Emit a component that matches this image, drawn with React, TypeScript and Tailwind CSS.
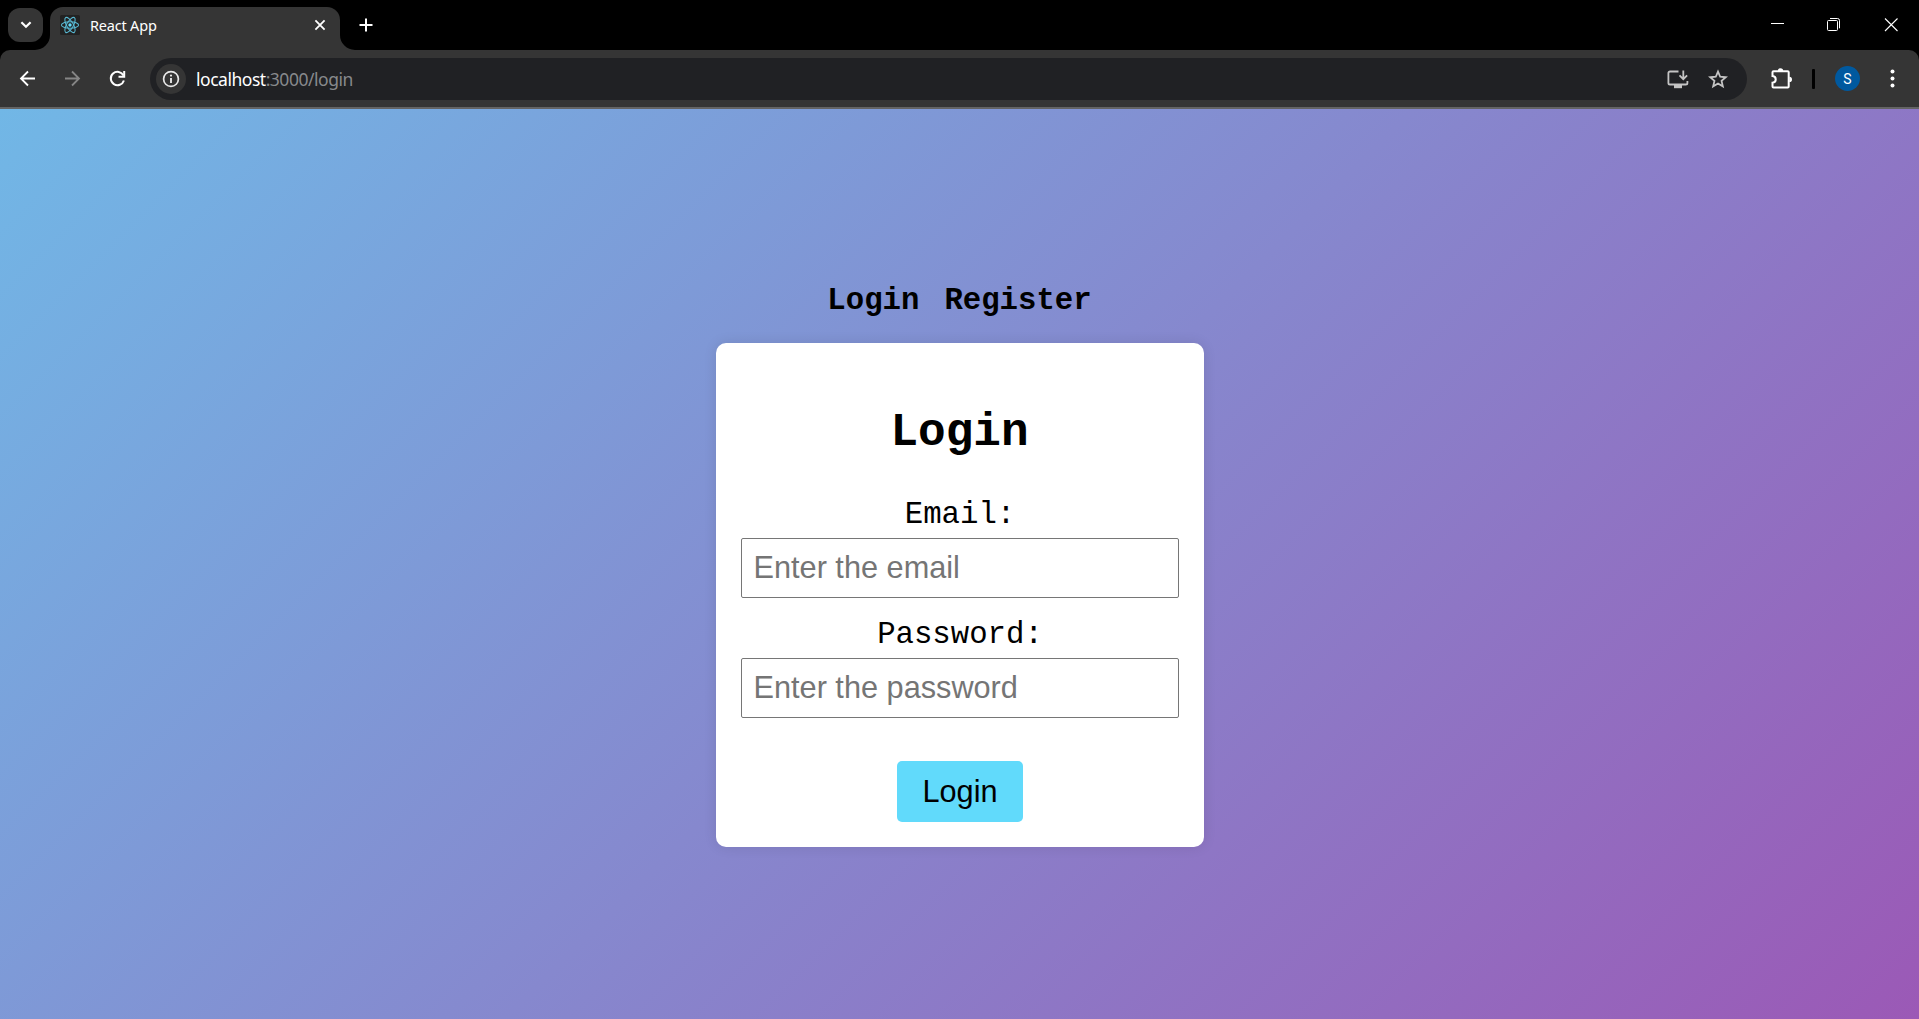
import React from 'react';

function ReactLogo() {
  return (
    <svg className="ml-[10px] h-5 w-5 shrink-0" viewBox="0 0 20 20" fill="none">
      <rect width="20" height="20" rx="1.5" fill="#222222" />
      <g stroke="#58b9d3" strokeWidth="1.05">
        <ellipse cx="10" cy="10" rx="8.6" ry="3.3" />
        <ellipse cx="10" cy="10" rx="8.6" ry="3.3" transform="rotate(60 10 10)" />
        <ellipse cx="10" cy="10" rx="8.6" ry="3.3" transform="rotate(120 10 10)" />
      </g>
      <circle cx="10" cy="10" r="1.7" fill="#61dafb" />
    </svg>
  );
}

function TabStrip() {
  return (
    <div className="flex h-[50px] bg-black text-white">
      <button className="mt-2 ml-2 flex h-[34px] w-[35px] items-center justify-center rounded-[12px] bg-[#353535]">
        <svg width="12" height="8" viewBox="0 0 12 8" fill="none" stroke="#fff" strokeWidth="2.2">
          <path d="M1.4 1.3 6 5.8l4.6-4.5" />
        </svg>
      </button>
      <div className="relative mt-[7px] ml-[7px] flex h-[43px] w-[290px] rounded-t-[13px] bg-[#353535]">
        <svg className="absolute bottom-0 -left-[15px]" width="15" height="15">
          <path d="M15 0v15H0A15 15 0 0 0 15 0Z" fill="#353535" />
        </svg>
        <svg className="absolute -right-[15px] bottom-0" width="15" height="15">
          <path d="M0 0v15h15A15 15 0 0 1 0 0Z" fill="#353535" />
        </svg>
        <div className="flex h-9 w-full items-center">
          <ReactLogo />
          <span className='ml-[10px] font-["Noto_Sans",sans-serif] text-[14.5px] leading-5 tracking-[-0.2px] whitespace-nowrap'>
            React App
          </span>
          <svg className="mr-[14px] ml-auto" width="12" height="12" viewBox="0 0 12 12" stroke="#fff" strokeWidth="1.8">
            <path d="m1.4 1.4 9.2 9.2m0-9.2-9.2 9.2" />
          </svg>
        </div>
      </div>
      <svg className="mt-[18px] ml-[19px]" width="14" height="14" viewBox="0 0 14 14" stroke="#fff" strokeWidth="2">
        <path d="M7 .5v13M.5 7h13" />
      </svg>
      <div className="mt-[17px] mr-5 ml-auto flex gap-[42px]">
        <svg width="15" height="15" viewBox="0 0 15 15" stroke="#fff">
          <path d="M1 6.5h13" />
        </svg>
        <svg width="15" height="15" viewBox="0 0 15 15" fill="none" stroke="#fff">
          <rect x=".5" y="3.5" width="10" height="10" rx="1" />
          <path d="M3 1.5h7.5a2 2 0 0 1 2 2v7.8" />
        </svg>
        <svg width="15" height="15" viewBox="0 0 15 15" stroke="#fff" strokeWidth="1.1">
          <path d="m1 1.5 12.5 12.5M13.5 1.5 1 14" />
        </svg>
      </div>
    </div>
  );
}

function Toolbar() {
  return (
    <div className="bg-black">
      <div className="flex h-[59px] items-start rounded-t-[10px] border-b-2 border-[#646464] bg-[#353535]">
        <div className="mt-[19px] flex">
          <svg className="ml-[19px]" width="18" height="19" viewBox="0 0 18 19" fill="none" stroke="#fff" strokeWidth="1.8">
            <path d="M16 9.5H2.3M9 2.5l-7 7 7 7" />
          </svg>
          <svg className="ml-[26px]" width="18" height="19" viewBox="0 0 18 19" fill="none" stroke="#868686" strokeWidth="1.8">
            <path d="M2 9.5h13.7M9 2.5l7 7-7 7" />
          </svg>
          <svg className="ml-[27px]" width="19" height="19" viewBox="0 0 19 19" fill="none" stroke="#fff" strokeWidth="2">
            <path d="M15.5 6.5A6.7 6.7 0 1 0 15.9 11.5" />
            <path d="M16.2 2v5.7h-5.7" />
          </svg>
        </div>
        <div className="mt-2 ml-[23px] flex h-[42px] w-[1597px] items-center rounded-full bg-[#202124]">
          <div className="ml-[6px] flex h-[30px] w-[30px] items-center justify-center rounded-full bg-[#353535]">
            <svg width="18" height="18" viewBox="0 0 18 18" fill="none">
              <circle cx="9" cy="9" r="7.4" stroke="#e8e8e8" strokeWidth="1.7" />
              <path d="M9 8v5" stroke="#e8e8e8" strokeWidth="1.9" />
              <circle cx="9" cy="5.6" r="1.1" fill="#e8e8e8" />
            </svg>
          </div>
          <div className='ml-[10px] font-["Noto_Sans",sans-serif] text-[17.5px] leading-6 tracking-[-0.48px] whitespace-nowrap text-[#87898c]'>
            <span className="text-white">localhost</span>:3000/login
          </div>
          <svg className="ml-auto" width="22" height="20" viewBox="0 0 22 20" fill="none">
            <path d="M11.5 2.5H3a1.6 1.6 0 0 0-1.6 1.6v9.8A1.6 1.6 0 0 0 3 15.5h15.8a1.6 1.6 0 0 0 1.6-1.6V12" stroke="#c4c4c4" strokeWidth="1.8" />
            <path d="M7 16h8v3.2H7z" fill="#c4c4c4" />
            <path d="M16.3 1.5v8.5m-3.8-3.7 3.8 3.9 3.8-3.9" stroke="#c4c4c4" strokeWidth="1.8" />
          </svg>
          <svg className="mr-[19px] ml-[19px]" width="20" height="20" viewBox="0 0 20 20" fill="none">
            <path d="m10 2.6 2.2 5.15 5.6.48-4.24 3.68 1.27 5.46L10 14.48l-4.83 2.89 1.27-5.46L2.2 8.23l5.6-.48L10 2.6Z" stroke="#c4c4c4" strokeWidth="1.8" />
          </svg>
        </div>
        <svg className="mt-[17px] ml-[23px]" width="23" height="23" viewBox="0 0 23 23" fill="none">
          <path d="M3.5 4.3h14.2c.6 0 1 .4 1 1v14.2c0 .6-.4 1-1 1H3.5c-.6 0-1-.4-1-1v-3.8c4.3-.5 4.3-6.1 0-6.6V5.3c0-.6.4-1 1-1Z" stroke="#fff" strokeWidth="2" />
          <path d="M7.8 4a2.7 2.7 0 0 1 5.4 0zM19.3 9.7a2.7 2.7 0 0 1 0 5.4z" fill="#fff" />
        </svg>
        <div className="mt-[19px] ml-[19px] h-5 w-[3px] rounded-[1px] bg-black" />
        <div className='mt-4 ml-5 flex h-[25px] w-[25px] items-center justify-center rounded-full bg-[#00599f] font-["Roboto",sans-serif] text-[14px] leading-none text-white'>
          S
        </div>
        <svg className="mt-[17px] ml-[30px]" width="5" height="23" viewBox="0 0 5 23" fill="#fff">
          <circle cx="2.5" cy="4.5" r="2" />
          <circle cx="2.5" cy="11.5" r="2" />
          <circle cx="2.5" cy="18.5" r="2" />
        </svg>
      </div>
    </div>
  );
}

function Field({ label, placeholder, type }: { label: string; placeholder: string; type: string }) {
  return (
    <label className="block pt-px text-center leading-9">
      <span className="ml-px">{label}</span>
      <input
        type={type}
        placeholder={placeholder}
        className='mt-[5px] block h-[60px] w-full rounded-[2px] border border-[#767676] bg-white px-3 font-["Liberation_Sans",Arial,sans-serif] placeholder:text-[#757575]'
      />
    </label>
  );
}

export default function App() {
  return (
    <div className="flex h-[1019px] w-[1919px] flex-col overflow-hidden">
      <TabStrip />
      <Toolbar />
      <main className='flex flex-1 flex-col items-center bg-[linear-gradient(135deg,#71b7e6,#9b59b6)] pt-[174px] font-["Courier_New","Liberation_Mono",monospace] text-[30.7px] text-black'>
        <nav className="flex gap-[25px] leading-9 font-bold">
          <a>Login</a>
          <a>Register</a>
        </nav>
        <form className="mt-6 flex h-[504px] w-[488px] flex-col rounded-[10px] bg-white p-[25px] shadow-[0_0_12.5px_rgba(0,0,0,0.1)]">
          <h2 className="mt-[38px] mb-9 text-center text-[46.05px] leading-[54px] font-bold">Login</h2>
          <Field label="Email:" placeholder="Enter the email" type="email" />
          <div className="mt-[18px]">
            <Field label="Password:" placeholder="Enter the password" type="password" />
          </div>
          <button
            type="button"
            className='mt-[43px] h-[61px] w-[126px] self-center rounded-[5px] bg-[#61dafb] pt-[2px] pl-px font-["Liberation_Sans",Arial,sans-serif]'
          >
            Login
          </button>
        </form>
      </main>
    </div>
  );
}
